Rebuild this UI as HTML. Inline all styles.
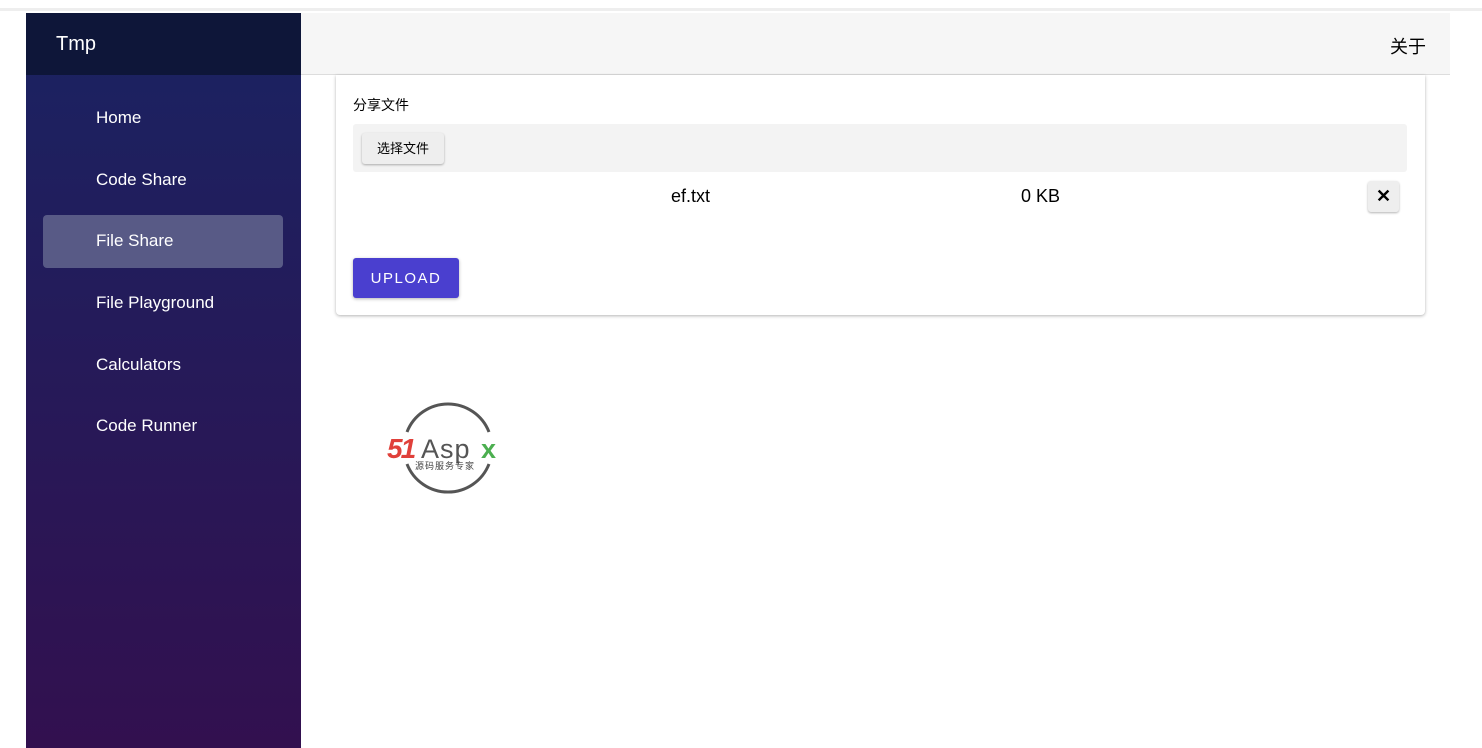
<!DOCTYPE html>
<html><head><meta charset="utf-8"><style>
*{margin:0;padding:0;box-sizing:border-box}
body{width:1482px;height:748px;background:#fff;font-family:"Liberation Sans","Noto Sans CJK SC",sans-serif;position:relative;overflow:hidden}
.topline{position:absolute;left:0;top:8px;width:1482px;height:3px;background:#eee}
.side{position:absolute;left:26px;top:13px;width:275px;height:735px;background:linear-gradient(#1a2362,#32104f)}
.brand{height:62px;background:#0e1639;color:#fff;font-size:20px;padding:20px 0 0 30px}
.item{position:absolute;left:70px;color:#fff;font-size:17px}
.active{position:absolute;left:17px;top:202px;width:240px;height:53px;background:#585a86;border-radius:4px}
.header{position:absolute;left:301px;top:13px;width:1149px;height:62px;background:#f6f6f6;border-bottom:1px solid #ddd}
.header span{position:absolute;right:24px;top:20px;font-size:18px}
.card{position:absolute;left:336px;top:75px;width:1089px;height:240px;background:#fff;border-radius:0 0 4px 4px;box-shadow:0 1px 3px rgba(0,0,0,.3)}
</style></head><body>
<div class="topline"></div>
<div class="side">
<div class="brand">Tmp</div>
<div class="active"></div>
<div class="item" style="top:95px">Home</div>
<div class="item" style="top:157px">Code Share</div>
<div class="item" style="top:218px">File Share</div>
<div class="item" style="top:280px">File Playground</div>
<div class="item" style="top:342px">Calculators</div>
<div class="item" style="top:403px">Code Runner</div>
</div>
<div class="header"><span>关于</span></div>
<div class="card">
<div style="position:absolute;left:17px;top:20px;font-size:14px">分享文件</div>
<div style="position:absolute;left:17px;top:49px;width:1054px;height:48px;background:#f3f3f3;border-radius:3px"></div>
<div style="position:absolute;left:26px;top:58px;width:82px;height:31px;background:#eee;border-radius:3px;box-shadow:0 1px 2px rgba(0,0,0,.3);font-size:13px;text-align:center;line-height:31px">选择文件</div>
<div style="position:absolute;left:335px;top:111px;font-size:18px">ef.txt</div>
<div style="position:absolute;left:685px;top:111px;font-size:18px">0 KB</div>
<div style="position:absolute;left:1032px;top:106px;width:31px;height:31px;background:#eee;border-radius:3px;box-shadow:0 1px 2px rgba(0,0,0,.3);font-size:18px;text-align:center;line-height:30px;font-weight:bold">✕</div>
<div style="position:absolute;left:17px;top:183px;width:106px;height:40px;background:#4a3fcf;border-radius:3px;box-shadow:0 1px 3px rgba(0,0,0,.3);color:#fff;font-size:15px;letter-spacing:1.5px;text-align:center;line-height:42px">UPLOAD</div>
</div>
<svg style="position:absolute;left:385px;top:400px" width="130" height="95" viewBox="0 0 130 95">
<path d="M22 32 A44 44 0 0 1 104 32" fill="none" stroke="#555" stroke-width="3"/>
<path d="M104 64 A44 44 0 0 1 22 64" fill="none" stroke="#555" stroke-width="3"/>
<text x="2" y="58" font-size="28" font-weight="bold" font-style="italic" fill="#e0403a" font-family="Liberation Sans" letter-spacing="-2">51</text>
<text x="36" y="58" font-size="27" fill="#555" font-family="Liberation Sans" letter-spacing="1">Asp</text>
<text x="96" y="58" font-size="27" font-weight="bold" fill="#4caf50" font-family="Liberation Sans">x</text>
<text x="30" y="69" font-size="9" fill="#444" font-family="Noto Sans CJK SC" letter-spacing="1">源码服务专家</text>
</svg>
</body></html>
